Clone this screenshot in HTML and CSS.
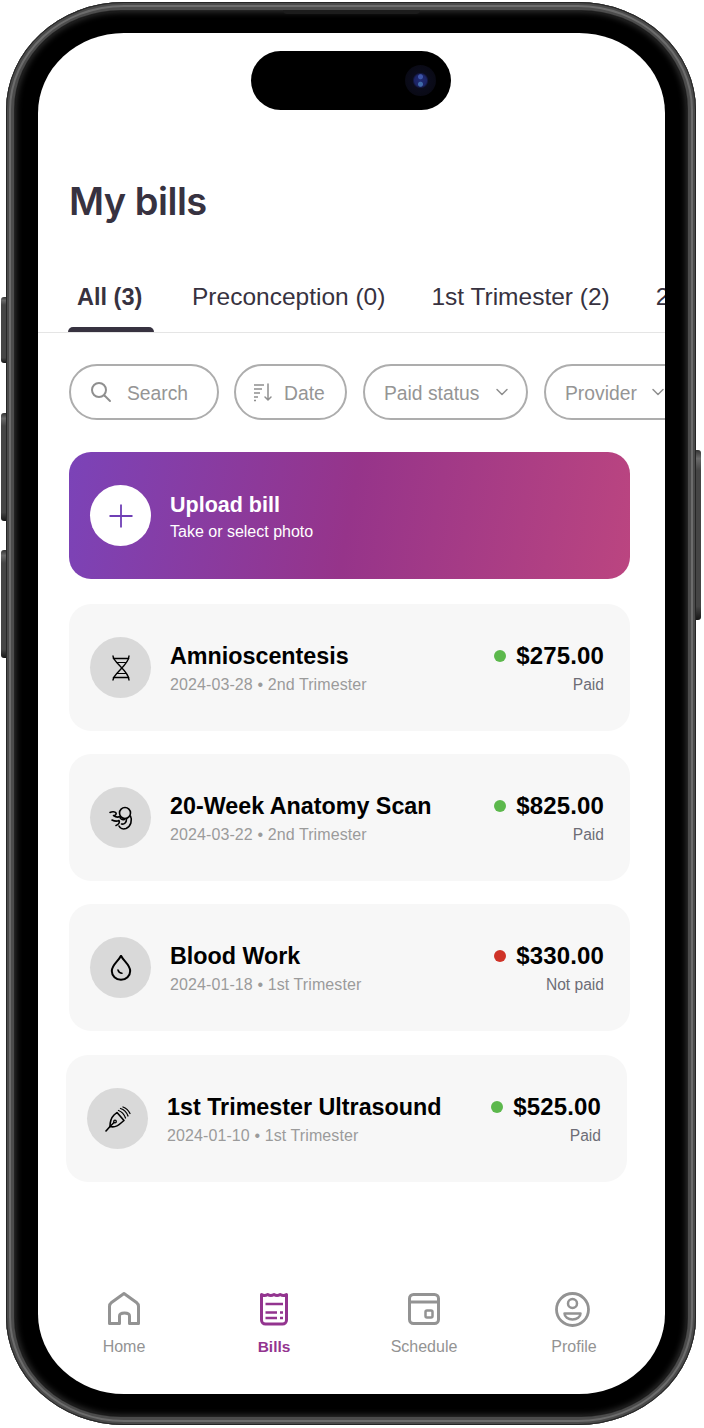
FILE: index.html
```html
<!DOCTYPE html>
<html lang="en">
<head>
    <meta charset="UTF-8">
    <meta name="viewport" content="width=device-width, initial-scale=1.0">
    <title>My bills</title>
    <link rel="stylesheet" href="styles.css">
</head>
<body>
    <div class="phone">
        <span class="side-btn mute"></span>
        <span class="side-btn vol-up"></span>
        <span class="side-btn vol-down"></span>
        <span class="side-btn power"></span>
        <span class="speaker"></span>

        <div class="bezel">
            <main class="screen">
                <div class="island"><span class="camera"></span></div>

                <h1 class="title">My bills</h1>

                <nav class="tabs">
                    <a class="tab active">All (3)</a>
                    <a class="tab">Preconception (0)</a>
                    <a class="tab">1st Trimester (2)</a>
                    <a class="tab">2nd Trimester (2)</a>
                </nav>

                <div class="filters">
                    <div class="filter search">
                        <svg width="24" height="24" viewBox="0 0 24 24" fill="none" stroke="#8f8f8f" stroke-width="2" stroke-linecap="round"><circle cx="10" cy="10" r="7"/><path d="M15.500 15.500 21 21"/></svg>
                        <span>Search</span>
                    </div>
                    <div class="filter date">
                        <svg width="20" height="20" viewBox="0 0 20 20" fill="none" stroke="#8f8f8f" stroke-width="1.500"><path d="M1 3h10M1 7h8M1 11h6M1 15h4M1 18.500h2"/><path d="M15 2v16M12 15l3 3 3-3" stroke-linecap="round"/></svg>
                        <span>Date</span>
                    </div>
                    <div class="filter paid">
                        <span>Paid status</span>
                        <svg class="chevron" width="14" height="8" viewBox="0 0 14 8" fill="none" stroke="#8f8f8f" stroke-width="1.500" stroke-linecap="round" stroke-linejoin="round"><path d="M2 1.500 7 6.500l5-5"/></svg>
                    </div>
                    <div class="filter provider">
                        <span>Provider</span>
                        <svg class="chevron" width="14" height="8" viewBox="0 0 14 8" fill="none" stroke="#8f8f8f" stroke-width="1.500" stroke-linecap="round" stroke-linejoin="round"><path d="M2 1.500 7 6.500l5-5"/></svg>
                    </div>
                </div>

                <section class="list">
                    <div class="upload">
                        <div class="circle white">
                            <svg width="26" height="26" viewBox="0 0 26 26" fill="none" stroke="#6f3fb5" stroke-width="1.800"><path d="M13 1.500v23M1.500 13h23"/></svg>
                        </div>
                        <div class="upload-text">
                            <div class="upload-title">Upload bill</div>
                            <div class="upload-sub">Take or select photo</div>
                        </div>
                    </div>

                    <div class="bill">
                        <div class="circle">
                            <svg width="26" height="26" viewBox="0 0 26 26" fill="none" stroke="#000" stroke-width="1.400" stroke-linecap="round"><path d="M5 1C5 7.500 21 16 21 25M21 1C21 10 5 18.500 5 25"/><path d="M5.500 3.500h15M5.500 22.500h15" stroke-width="1.600"/><path d="M8.500 7.500h9M8.500 18.500h9" stroke-width="1.100"/></svg>
                        </div>
                        <div class="bill-info">
                            <div class="bill-name">Amnioscentesis</div>
                            <div class="bill-meta">2024-03-28 • 2nd Trimester</div>
                        </div>
                        <div class="bill-side">
                            <div class="bill-amount"><span class="dot green"></span>$275.00</div>
                            <div class="bill-status">Paid</div>
                        </div>
                    </div>

                    <div class="bill">
                        <div class="circle">
                            <svg width="26" height="26" viewBox="0 0 26 26" fill="none" stroke="#000" stroke-width="1.600" stroke-linecap="round" stroke-linejoin="round"><circle cx="17" cy="8" r="5.500"/><path d="M22.500 11C24.500 15 23 21.500 18 23.500 15 24.500 12 23.500 11 21"/><path d="M12 11.500C12 14 14 15 16.500 14.500M18.500 14C18.500 17.500 16.500 19.500 13.500 19"/><path d="M2 7.500C4 6.500 7 6.500 8 8 8.800 9.300 7 10.500 5.500 10.500 7.500 12 10 12.500 12 11.500M4 15C6 16 9 16.500 11 15.500 12 17 11 19.500 8 20.500"/></svg>
                        </div>
                        <div class="bill-info">
                            <div class="bill-name">20-Week Anatomy Scan</div>
                            <div class="bill-meta">2024-03-22 • 2nd Trimester</div>
                        </div>
                        <div class="bill-side">
                            <div class="bill-amount"><span class="dot green"></span>$825.00</div>
                            <div class="bill-status">Paid</div>
                        </div>
                    </div>

                    <div class="bill">
                        <div class="circle">
                            <svg width="26" height="26" viewBox="0 0 26 26" fill="none" stroke="#000" stroke-width="2" stroke-linecap="round" stroke-linejoin="round"><path d="M13 .800C10.500 6 3.800 10 3.800 16a9.200 8.700 0 0 0 18.400 0C22.200 10 15.500 6 13 .800Z"/><path d="M10 15c.6 2 2 3.200 4 3.200" stroke-width="1.600"/></svg>
                        </div>
                        <div class="bill-info">
                            <div class="bill-name">Blood Work</div>
                            <div class="bill-meta">2024-01-18 • 1st Trimester</div>
                        </div>
                        <div class="bill-side">
                            <div class="bill-amount"><span class="dot red"></span>$330.00</div>
                            <div class="bill-status">Not paid</div>
                        </div>
                    </div>

                    <div class="bill shifted">
                        <div class="circle">
                            <svg width="26" height="26" viewBox="0 0 26 26" fill="none" stroke="#000" stroke-width="1.600" stroke-linecap="round" stroke-linejoin="round"><path d="M1 25l4-4.500"/><path d="M5 20.500C5 17 6 12 9 9L12 6.500 19 14.500 16 17C13 20 9 21.500 5 20.500Z"/><path d="M5 20.500 9 16.500"/><circle cx="10" cy="15.500" r="1.300" stroke-width="1.300"/><path d="M13.500 4.500C16.500 5.500 19 8 20.500 12M15.500 2.500C19 3.500 21.500 6 23 10M18 1C21 2 23.500 4.500 25 7.500" stroke-width="1.300"/></svg>
                        </div>
                        <div class="bill-info">
                            <div class="bill-name">1st Trimester Ultrasound</div>
                            <div class="bill-meta">2024-01-10 • 1st Trimester</div>
                        </div>
                        <div class="bill-side">
                            <div class="bill-amount"><span class="dot green"></span>$525.00</div>
                            <div class="bill-status">Paid</div>
                        </div>
                    </div>
                </section>

                <nav class="bottom-nav">
                    <a class="nav-item">
                        <svg width="38" height="38" viewBox="0 0 38 38" fill="none" stroke="#939393" stroke-width="3" stroke-linejoin="round"><path d="M19 3.500 6.500 12.500Q4.500 14 4.500 16.500V33.500H14.500V26Q14.500 23 19.500 23T24.500 26V33.500H33.500V16.500Q33.500 14 31.500 12.500Z"/></svg>
                        <span>Home</span>
                    </a>
                    <a class="nav-item current">
                        <svg width="38" height="38" viewBox="0 0 38 38" fill="none" stroke="#93348f" stroke-width="3"><path d="M6.500 4.500q3 2 6.200 0 3 2 6.300 0 3 2 6.200 0 3.300 2 6.300 0V30a4 4 0 0 1-4 4H10.500a4 4 0 0 1-4-4Z" stroke-linejoin="round"/><path d="M10.500 14H28M10.500 22.500H22M25 22.500h3M10.500 28H22M25 28h3" stroke-width="2.500"/></svg>
                        <span>Bills</span>
                    </a>
                    <a class="nav-item">
                        <svg width="38" height="38" viewBox="0 0 38 38" fill="none" stroke="#939393" stroke-width="3"><rect x="4.500" y="4.500" width="29" height="29" rx="4"/><path d="M4.500 12h29"/><rect x="20.500" y="20.500" width="7" height="7" rx="1.500" stroke-width="2.500"/></svg>
                        <span>Schedule</span>
                    </a>
                    <a class="nav-item">
                        <svg width="38" height="38" viewBox="0 0 38 38" fill="none" stroke="#939393" stroke-width="2.800"><circle cx="17.500" cy="19.500" r="16"/><circle cx="17.500" cy="13.500" r="4.500" stroke-width="2.500"/><path d="M9.500 23.500h16c0 3.500-3.500 6-8 6s-8-2.500-8-6Z" stroke-width="2.500" stroke-linejoin="round"/></svg>
                        <span>Profile</span>
                    </a>
                </nav>
            </main>
        </div>
    </div>
</body>
</html>
```

FILE: styles.css
```css
* {
    box-sizing: border-box;
}

body {
    background-color: #ffffff;
    font-family: "Liberation Sans", Arial, sans-serif;
    margin: 0;
    padding: 2px 0 0 6px;
    width: 704px;
    height: 1428px;
    overflow: hidden;
}

.phone {
    position: relative;
    width: 690px;
    height: 1423px;
    padding: 9px;
    border-radius: 118px / 108px;
    background-color: #4c4c4c;
    box-shadow: inset 0 0 0 1px #262626, inset 0 0 0 3px #4a4a4a, inset 0 0 0 5px #6c6c6c;
}

.side-btn {
    position: absolute;
    width: 5px;
    background: linear-gradient(180deg, #333 0, #6a6a6a 5%, #454545 12%, #454545 92%, #161616 100%);
    border-radius: 3px 0 0 3px;
}

.mute {
    left: -5px;
    top: 295px;
    height: 66px;
}

.vol-up {
    left: -5px;
    top: 411px;
    height: 108px;
}

.vol-down {
    left: -5px;
    top: 548px;
    height: 108px;
}

.power {
    right: -5px;
    top: 448px;
    height: 170px;
    border-radius: 0 3px 3px 0;
}

.speaker {
    position: absolute;
    left: 277px;
    top: 8px;
    width: 137px;
    height: 4px;
    background-color: #1c1c1c;
    border-radius: 0 0 4px 4px;
}

.bezel {
    height: 100%;
    padding: 22px 22px 22px 23px;
    background-color: #000000;
    border-radius: 106px / 98px;
    box-shadow: 0 0 0 1px #222222, inset 0 0 6px 1px #333333;
}

.screen {
    position: relative;
    display: flex;
    flex-direction: column;
    height: 100%;
    padding-top: 145px;
    overflow: hidden;
    background-color: #ffffff;
    border-radius: 86px / 80px;
}

.island {
    position: absolute;
    left: 213px;
    top: 18px;
    width: 200px;
    height: 59px;
    background-color: #000000;
    border-radius: 30px;
}

.camera {
    position: absolute;
    right: 15px;
    top: 14px;
    width: 31px;
    height: 31px;
    border-radius: 50%;
    background:
        radial-gradient(circle at 50% 38%, #3d55a8 0, #3d55a8 2px, transparent 3px),
        radial-gradient(circle at 50% 62%, #3f6aa8 0, #3f6aa8 2px, transparent 3px),
        radial-gradient(circle, #1f2a72 0, #1c2466 6px, #0b0c1c 8px, #08080f 100%);
}

.title {
    margin: 0 0 0 31px;
    font-family: Inter, sans-serif;
    font-size: 38px;
    line-height: 46px;
    font-weight: 600;
    letter-spacing: -0.5px;
    color: #373240;
}

.tabs {
    display: flex;
    flex-shrink: 0;
    gap: 28px;
    height: 50px;
    margin-top: 59px;
    padding-left: 30px;
    border-bottom: 1px solid #e5e5e5;
    overflow: hidden;
}

.tab {
    position: relative;
    flex-shrink: 0;
    padding: 0 9px;
    font-size: 24.500px;
    line-height: 28px;
    color: #373240;
    white-space: nowrap;
}

.tab.active {
    width: 87px;
    font-size: 23.500px;
    font-weight: 700;
}

.tab.active::after {
    content: "";
    position: absolute;
    left: 0;
    right: 1px;
    top: 44px;
    height: 6px;
    background-color: #373240;
    border-radius: 5px 5px 0 0;
}

.filters {
    display: flex;
    flex-shrink: 0;
    gap: 16px;
    margin-top: 31px;
    padding-left: 31px;
}

.filter {
    display: flex;
    flex-shrink: 0;
    align-items: center;
    height: 56px;
    border: 2px solid #adadad;
    border-radius: 28px;
    font-size: 19.300px;
    color: #959595;
    white-space: nowrap;
}

.filter span {
    margin-top: 3px;
}

.search {
    width: 150px;
    margin-right: -1px;
    gap: 14px;
    padding-left: 18px;
}

.date {
    width: 113px;
    gap: 11px;
    padding-left: 17px;
}

.paid {
    width: 165px;
    gap: 16px;
    padding-left: 19px;
}

.provider {
    width: 160px;
    gap: 14px;
    padding-left: 19px;
}

.list {
    display: flex;
    flex-direction: column;
    gap: 23px;
    margin-top: 32px;
    padding: 0 35px 0 31px;
}

.circle {
    display: flex;
    flex-shrink: 0;
    align-items: center;
    justify-content: center;
    width: 61px;
    height: 61px;
    border-radius: 50%;
    background-color: #d9d9d9;
}

.circle.white {
    background-color: #ffffff;
}

.upload {
    display: flex;
    align-items: center;
    gap: 19px;
    height: 127px;
    margin-bottom: 2px;
    padding-left: 21px;
    border-radius: 22px;
    background: linear-gradient(100deg, #7b43b8 0%, #96348a 50%, #bb4580 100%);
    color: #ffffff;
}

.upload-text {
    padding-top: 2px;
}

.upload-title {
    font-size: 21.500px;
    line-height: 28px;
    font-weight: 700;
}

.upload-sub {
    margin-top: 3px;
    font-size: 16px;
    line-height: 20px;
}

.bill {
    display: flex;
    align-items: center;
    gap: 19px;
    height: 127px;
    padding: 0 26px 0 21px;
    border-radius: 22px;
    background-color: #f7f7f7;
}

.shifted {
    margin: 1px 3px 0 -3px;
}

.bill-info {
    flex: 1;
    min-width: 0;
    padding-top: 1px;
}

.bill-name {
    font-size: 23.300px;
    line-height: 30px;
    font-weight: 700;
    color: #000000;
    white-space: nowrap;
}

.bill-meta {
    margin-top: 4px;
    font-size: 16px;
    line-height: 20px;
    letter-spacing: 0.1px;
    color: #9b9b9b;
    white-space: nowrap;
}

.bill-side {
    padding-top: 1px;
    text-align: right;
}

.bill-amount {
    display: flex;
    align-items: center;
    gap: 10px;
    font-size: 24px;
    line-height: 30px;
    font-weight: 700;
    letter-spacing: 0.15px;
    color: #000000;
}

.dot {
    width: 12px;
    height: 12px;
    border-radius: 50%;
}

.green {
    background-color: #5cb84c;
}

.red {
    background-color: #cf3328;
}

.bill-status {
    margin-top: 4px;
    font-size: 15.600px;
    line-height: 20px;
    color: #6d6d76;
}

.bottom-nav {
    display: flex;
    margin-top: auto;
    padding: 0 16px 37px 11px;
}

.nav-item {
    display: flex;
    flex: 1;
    flex-direction: column;
    align-items: center;
    gap: 9px;
    font-size: 16px;
    line-height: 20px;
    color: #939393;
}

.nav-item.current {
    font-size: 15.500px;
    font-weight: 700;
    color: #93348f;
}
```
